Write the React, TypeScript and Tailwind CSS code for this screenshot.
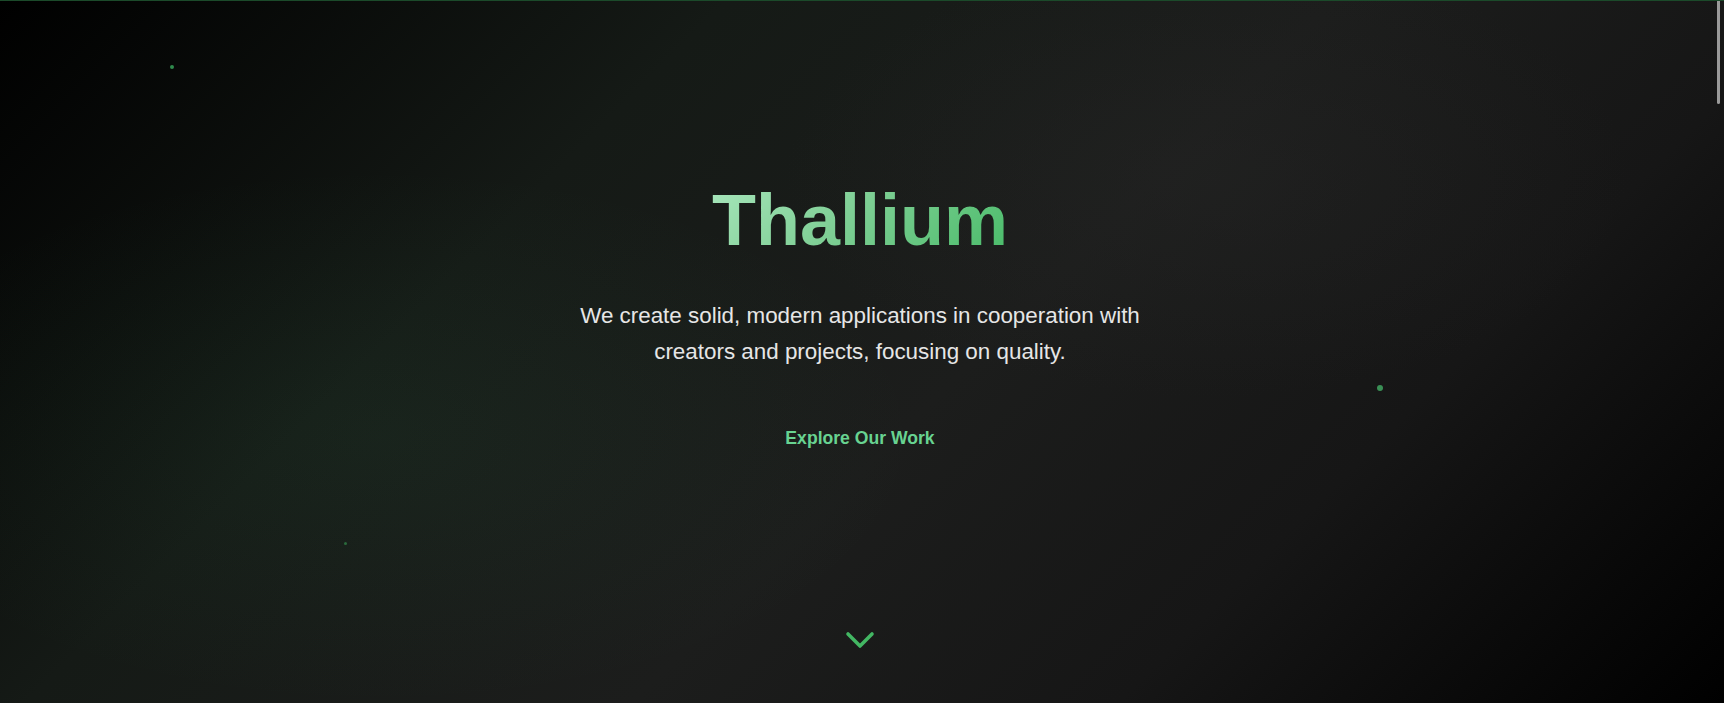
import React from "react";

export default function App() {
  return (
    <div
      className="relative w-full h-[703px] overflow-hidden border-t border-[#1b4a2a] text-white"
      style={{ fontFamily: '"Liberation Sans", Arial, sans-serif' }}
    >
      {/* background */}
      <div className="absolute inset-0 bg-[linear-gradient(135deg,#000000_0%,#151a16_30%,#1c1d1c_55%,#161616_75%,#000000_100%)]" />
      <div className="absolute inset-0 bg-[radial-gradient(ellipse_45%_55%_at_22%_62%,rgba(72,187,120,0.06),transparent_70%)]" />
      <div className="absolute inset-0 bg-[radial-gradient(ellipse_35%_45%_at_70%_25%,rgba(40,40,40,0.35),transparent_70%)]" />

      {/* particles */}
      <div className="absolute left-[170px] top-[64px] w-[4px] h-[4px] rounded-full bg-[#2f8a4c]" />
      <div className="absolute left-[1377px] top-[384px] w-[6px] h-[6px] rounded-full bg-[#3a8f55]" />
      <div className="absolute left-[344px] top-[541px] w-[3px] h-[3px] rounded-full bg-[#2a6a3c]" />

      {/* content */}
      <div className="relative flex flex-col items-center h-full pt-[176px] pb-[39px] pr-[4px]">
        <h1 className="text-[72px] leading-[1.2] font-bold bg-[linear-gradient(135deg,#a8e6bc_0%,#7fcf95_45%,#48bb68_100%)] bg-clip-text text-transparent">
          Thallium
        </h1>
        <p className="mt-[35px] max-w-[600px] text-center text-[22.4px] leading-[1.6] text-[#e6e6e6]">
          We create solid, modern applications in cooperation with creators and projects, focusing on quality.
        </p>
        <button className="mt-[43px] px-8 py-3 text-[17.6px] font-bold text-[#68d391] bg-transparent">
          Explore Our Work
        </button>
        <div className="mt-auto flex justify-center">
          <svg width="48" height="48" viewBox="0 0 24 24" fill="none" stroke="#43b763" strokeWidth="1.8" strokeLinecap="round" strokeLinejoin="round">
            <path d="m6 9 6 6 6-6" />
          </svg>
        </div>
      </div>

      {/* scrollbar thumb */}
      <div className="absolute right-[4px] top-0 w-[3px] h-[103px] rounded-b-sm bg-[#9a9a9a]" />
    </div>
  );
}
